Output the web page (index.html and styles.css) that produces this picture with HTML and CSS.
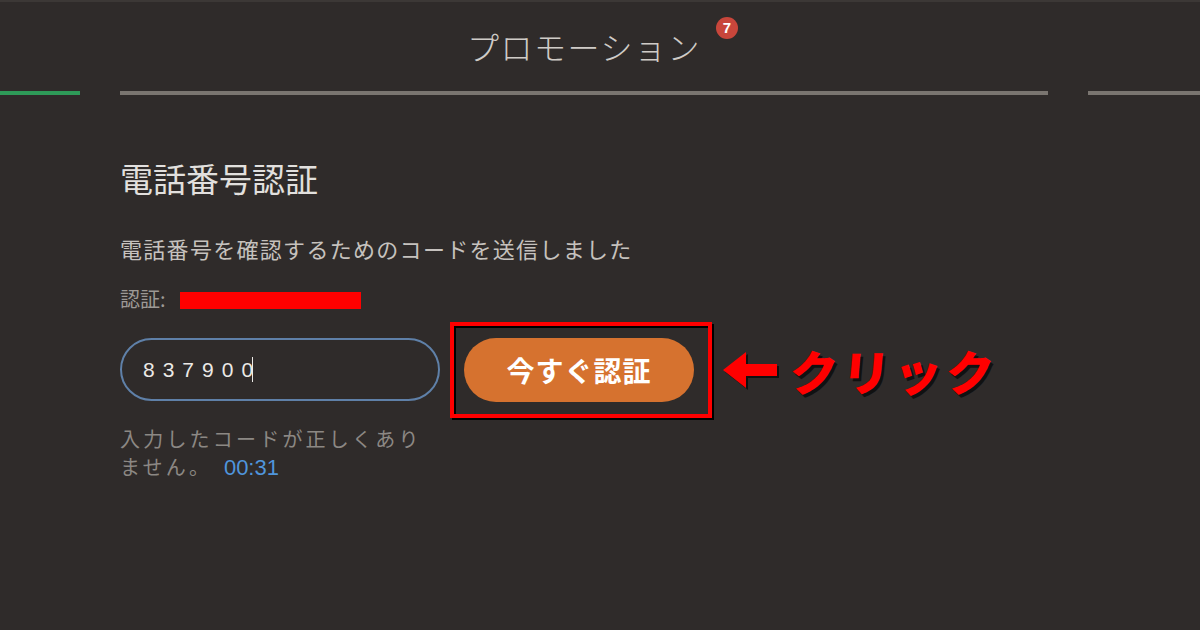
FILE: index.html
```html
<!DOCTYPE html>
<html lang="ja">
<head>
  <meta charset="UTF-8">
  <meta name="viewport" content="width=device-width, initial-scale=1.0">
  <title>電話番号認証</title>
  <link rel="stylesheet" href="styles.css">
</head>
<body>
  <header class="tabs">
    <div class="tab tab-side tab-active">
      <span class="tab-line"></span>
    </div>
    <div class="tab tab-main">
      <div class="tab-label">プロモーション<span class="badge">7</span></div>
      <span class="tab-line"></span>
    </div>
    <div class="tab tab-rest">
      <span class="tab-line"></span>
    </div>
  </header>

  <main class="verify">
    <h2 class="verify-title">電話番号認証</h2>
    <p class="verify-sent">電話番号を確認するためのコードを送信しました</p>
    <p class="verify-target">認証: <span class="redact"></span></p>

    <div class="code-row">
      <div class="code-col">
        <div class="code-input">837900<span class="caret"></span></div>
        <p class="code-error">入力したコードが正しくあり<br>ません。 <span class="timer">00:31</span></p>
      </div>

      <div class="annotate">
        <div class="highlight">
          <button type="button" class="verify-btn">今すぐ認証</button>
        </div>
        <div class="callout">
          <svg class="arrow" width="56" height="40" viewBox="0 0 56 40">
            <path d="M1 20 L24 2 L24 14 L55 14 L55 26 L24 26 L24 38 Z" fill="#ff0000"/>
          </svg>
          <span class="callout-text">クリック</span>
        </div>
      </div>
    </div>
  </main>
</body>
</html>
```

FILE: styles.css
```css
body {
  margin: 0;
  height: 628px;
  background-color: #2f2b2a;
  border-top: 2px solid #3c3836;
  font-family: "Noto Sans CJK JP", "Noto Sans", sans-serif;
  color: #dcdcdc;
  overflow: hidden;
}

/* tab header */
.tabs {
  display: flex;
  gap: 40px;
  height: 93px;
}

.tab {
  display: flex;
  flex-direction: column;
  justify-content: flex-end;
  align-items: center;
}

.tab-side {
  width: 80px;
}

.tab-main {
  width: 928px;
  justify-content: space-between;
}

.tab-rest {
  flex: 1;
}

.tab-line {
  display: block;
  width: 100%;
  height: 4px;
  background-color: #7a7570;
}

.tab-active .tab-line {
  background-color: #2e9a58;
}

.tab-label {
  position: relative;
  margin-top: 24px;
  font-size: 32px;
  font-weight: 300;
  line-height: 40px;
  color: #cfcbc7;
  letter-spacing: 1.5px;
}

.badge {
  position: absolute;
  top: -9px;
  left: calc(100% + 15px);
  width: 22px;
  height: 22px;
  border-radius: 50%;
  background-color: #c8463b;
  color: #fff;
  font-family: "Liberation Sans", Arial, sans-serif;
  font-size: 15px;
  font-weight: bold;
  line-height: 22px;
  text-align: center;
  letter-spacing: 0;
}

/* verification block */
.verify {
  padding-left: 120px;
}

.verify-title {
  margin: 63px 0 0;
  font-size: 33px;
  font-weight: 400;
  line-height: 40px;
  color: #e2e0de;
}

.verify-sent {
  margin: 35px 0 0;
  font-size: 22px;
  line-height: 30px;
  letter-spacing: 1.3px;
  color: #c6c2be;
}

.verify-target {
  display: flex;
  align-items: center;
  gap: 14px;
  margin: 24px 0 0;
  font-size: 20px;
  line-height: 24px;
  color: #9d9995;
}

.redact {
  display: inline-block;
  width: 181px;
  height: 17px;
  background-color: #ff0000;
  margin-top: 2px;
}

.code-row {
  display: flex;
  align-items: flex-start;
  gap: 10px;
  margin-top: 11px;
}

.code-col {
  margin-top: 16px;
}

.code-input {
  display: flex;
  align-items: center;
  box-sizing: border-box;
  width: 320px;
  height: 63px;
  padding-left: 21px;
  border: 2px solid #5f80a8;
  border-radius: 32px;
  font-family: "Liberation Sans", Arial, sans-serif;
  font-size: 21px;
  letter-spacing: 8px;
  color: #ebe9e6;
}

.caret {
  display: inline-block;
  width: 1px;
  height: 25px;
  margin-left: -9px;
  background-color: #ebe9e6;
}

.code-error {
  margin: 24px 0 0;
  font-size: 20px;
  line-height: 28px;
  letter-spacing: 3.2px;
  color: #8c8884;
}

.timer {
  margin-left: 4px;
  font-family: "Liberation Sans", Arial, sans-serif;
  font-size: 22px;
  line-height: 1;
  letter-spacing: 0;
  color: #4f95dc;
}

/* annotation */
.annotate {
  display: flex;
  align-items: center;
  gap: 10px;
}

.highlight {
  padding: 12px 14px 12px 10px;
  border: 4px solid #ff0000;
  box-shadow: 2px 2px 0 #000, inset 2px 2px 0 #000;
}

.verify-btn {
  display: block;
  width: 230px;
  height: 64px;
  border: none;
  border-radius: 32px;
  background-color: #d6722f;
  color: #fff;
  font-family: "Noto Sans CJK JP", sans-serif;
  font-size: 28px;
  font-weight: bold;
  letter-spacing: 1px;
  cursor: pointer;
}

.callout {
  display: flex;
  align-items: center;
  gap: 12px;
}

.arrow {
  display: block;
  filter: drop-shadow(2px 2px 0 #111);
}

.callout-text {
  font-size: 48px;
  font-weight: 900;
  line-height: 56px;
  letter-spacing: 4px;
  color: #ff0000;
  text-shadow: 3px 3px 0 #111;
  transform: skewX(-5deg);
}
```
